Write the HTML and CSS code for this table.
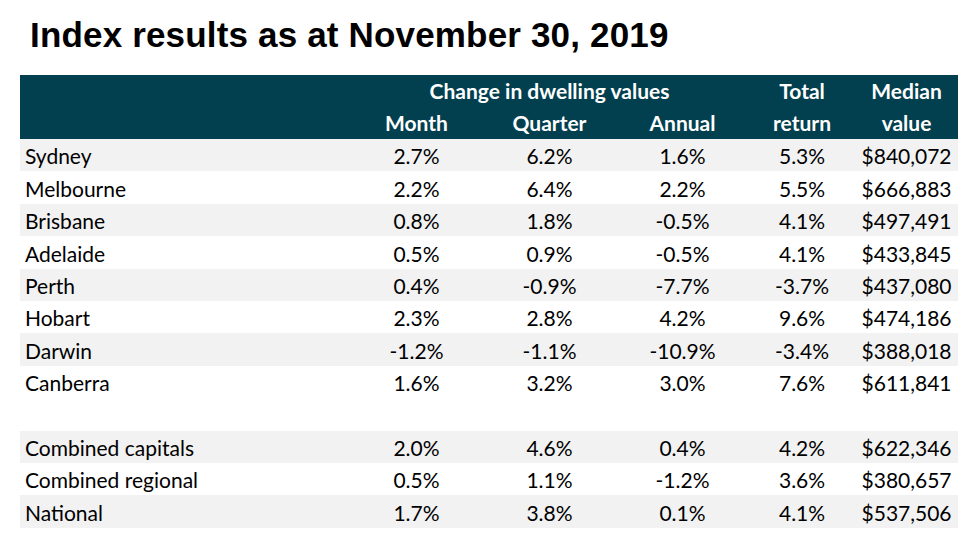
FILE: index.html
```html
<!DOCTYPE html>
<html>
<head>
<meta charset="utf-8">
<link rel="stylesheet" href="styles.css">
</head>
<body>
<h1 class="title">Index results as at November 30, 2019</h1>
<table class="results">
  <colgroup>
    <col class="c-name"><col class="c-num"><col class="c-num"><col class="c-num"><col class="c-total"><col class="c-median">
  </colgroup>
  <thead>
    <tr>
      <th></th>
      <th colspan="3">Change in dwelling values</th>
      <th>Total</th>
      <th>Median</th>
    </tr>
    <tr>
      <th></th>
      <th>Month</th>
      <th>Quarter</th>
      <th>Annual</th>
      <th>return</th>
      <th>value</th>
    </tr>
  </thead>
  <tbody>
    <tr class="shade"><td>Sydney</td><td>2.7%</td><td>6.2%</td><td>1.6%</td><td>5.3%</td><td>$840,072</td></tr>
    <tr><td>Melbourne</td><td>2.2%</td><td>6.4%</td><td>2.2%</td><td>5.5%</td><td>$666,883</td></tr>
    <tr class="shade"><td>Brisbane</td><td>0.8%</td><td>1.8%</td><td>-0.5%</td><td>4.1%</td><td>$497,491</td></tr>
    <tr><td>Adelaide</td><td>0.5%</td><td>0.9%</td><td>-0.5%</td><td>4.1%</td><td>$433,845</td></tr>
    <tr class="shade"><td>Perth</td><td>0.4%</td><td>-0.9%</td><td>-7.7%</td><td>-3.7%</td><td>$437,080</td></tr>
    <tr><td>Hobart</td><td>2.3%</td><td>2.8%</td><td>4.2%</td><td>9.6%</td><td>$474,186</td></tr>
    <tr class="shade"><td>Darwin</td><td>-1.2%</td><td>-1.1%</td><td>-10.9%</td><td>-3.4%</td><td>$388,018</td></tr>
    <tr><td>Canberra</td><td>1.6%</td><td>3.2%</td><td>3.0%</td><td>7.6%</td><td>$611,841</td></tr>
    <tr class="blank"><td></td><td></td><td></td><td></td><td></td><td></td></tr>
    <tr class="shade"><td>Combined capitals</td><td>2.0%</td><td>4.6%</td><td>0.4%</td><td>4.2%</td><td>$622,346</td></tr>
    <tr><td>Combined regional</td><td>0.5%</td><td>1.1%</td><td>-1.2%</td><td>3.6%</td><td>$380,657</td></tr>
    <tr class="shade"><td>National</td><td>1.7%</td><td>3.8%</td><td>0.1%</td><td>4.1%</td><td>$537,506</td></tr>
  </tbody>
</table>
</body>
</html>
```
FILE: styles.css
```css
html, body {
  margin: 0;
  padding: 0;
  background: #ffffff;
}

.title {
  margin: 15px 0 0 30px;
  font-family: "Liberation Sans", Arial, sans-serif;
  font-weight: bold;
  font-size: 35px;
  line-height: 40px;
  letter-spacing: 0.17px;
  color: #000000;
}

.results {
  margin: 20px 0 0 20px;
  width: 938px;
  table-layout: fixed;
  border-collapse: collapse;
  border-spacing: 0;
  font-family: Lato, "Liberation Sans", sans-serif;
  font-size: 21px;
  color: #000000;
}

.c-name { width: 330px; }
.c-num { width: 133px; }
.c-total { width: 106px; }
.c-median { width: 103px; }

.results thead {
  background: #02404f;
  color: #ffffff;
}

.results th {
  padding: 0;
  height: 32px;
  line-height: 32px;
  font-weight: bold;
  text-align: center;
  white-space: nowrap;
}

.results tbody tr {
  height: 32.4px;
}

.results td {
  padding: 2.4px 0 0;
  line-height: 30px;
  vertical-align: top;
  text-align: center;
  white-space: nowrap;
}

.results td:first-child {
  text-align: left;
  padding-left: 5px;
}

.results tr.shade {
  background: #f2f2f2;
}
```
